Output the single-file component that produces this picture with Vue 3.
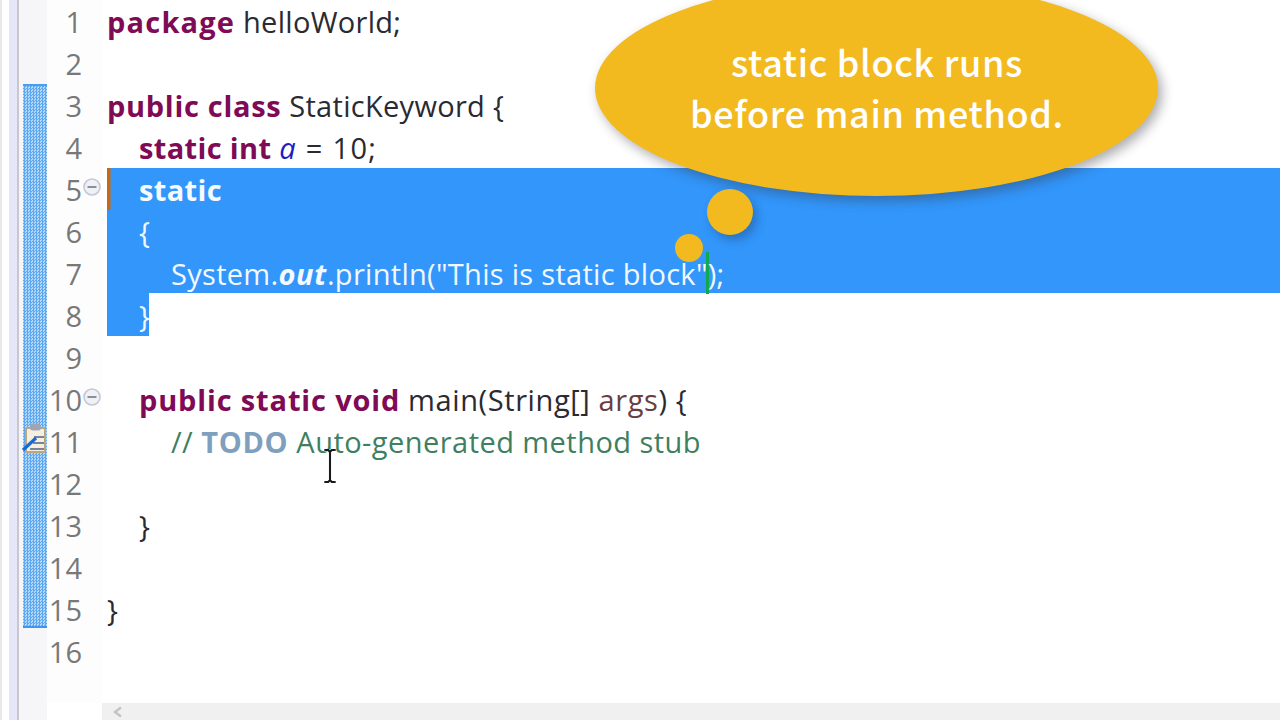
<script setup>
const lines = [
  { n: 1, indent: 0, html: '<b class="wide">package</b> helloWorld;' },
  { n: 2, indent: 0, html: '' },
  { n: 3, indent: 0, html: '<b>public class</b> StaticKeyword {' },
  { n: 4, indent: 1, html: '<b class="tight">static int</b> <span class="loose"><i>a</i> = 10;</span>' },
  { n: 5, indent: 1, html: '<b class="tight">static</b>', sel: 'full', fold: true },
  { n: 6, indent: 1, html: '{', sel: 'full' },
  { n: 7, indent: 2, html: 'System.<em>out</em>.println(<s>"This is static block"</s><u></u>);', sel: 'full', cut: true },
  { n: 8, indent: 1, html: '}', sel: 'part' },
  { n: 9, indent: 0, html: '' },
  { n: 10, indent: 1, html: '<b class="mid">public static void</b> <span class="roomy">main(String[] <q>args</q>) {</span>', fold: true },
  { n: 11, indent: 2, html: '<a>// <strong>TODO</strong> Auto-generated method stub</a>', task: true },
  { n: 12, indent: 0, html: '' },
  { n: 13, indent: 1, html: '}' },
  { n: 14, indent: 0, html: '' },
  { n: 15, indent: 0, html: '}' },
  { n: 16, indent: 0, html: '' }
]
</script>

<template>
  <div class="screen">
    <div class="edge"></div>
    <div class="band"></div>
    <div class="ruler-col">
      <div class="ruler"></div>
    </div>
    <div class="main">
      <div class="body">
        <div class="gutter">
          <div v-for="l in lines" :key="l.n" class="num-row">
            <svg v-if="l.task" class="task" viewBox="0 0 25 31">
              <rect x="4" y="5" width="19" height="24" rx="1" fill="#f4efe0" stroke="#bda77a" stroke-width="2" />
              <rect x="8" y="0.5" width="11" height="7" rx="3" fill="#9fa5b2" />
              <path d="M12 14h10M11 20h11M8 26h14" stroke="#76859a" stroke-width="1.8" />
              <path d="M1 27 14 15" stroke="#1668d8" stroke-width="3.2" />
            </svg>
            <span class="num">{{ l.n }}</span>
            <svg v-if="l.fold" class="fold" viewBox="0 0 18 18">
              <circle cx="9" cy="9" r="8" fill="#f0f1f5" stroke="#c3c8d4" stroke-width="1.6" />
              <path d="M4.5 9h9" stroke="#7d8594" stroke-width="1.8" />
            </svg>
          </div>
        </div>
        <div class="code">
          <div
            v-for="l in lines"
            :key="l.n"
            class="line"
            :class="[`indent-${l.indent}`, l.sel && `sel-${l.sel}`, l.fold && l.sel && 'marked', l.cut && 'cut']"
          ><span class="text" v-html="l.html"></span></div>
        </div>
      </div>
      <div class="scrollbar">
        <svg class="arrow" viewBox="0 0 12 12"><path d="M9 1.5 3 6l6 4.5" fill="none" stroke="#c4c4c4" stroke-width="2.4" /></svg>
      </div>
    </div>

    <div class="bubble">
      <p>static block runs</p>
      <p>before main method.</p>
    </div>
    <div class="dot dot-big"></div>
    <div class="dot dot-small"></div>

    <svg class="ibeam" viewBox="0 0 16 36">
      <path d="M2 1h4l2 2 2-2h4M8 3v30M2 35h4l2-2 2 2h4" fill="none" stroke="#fff" stroke-width="3.6" opacity=".7" />
      <path d="M2 1h4l2 2 2-2h4M8 3v30M2 35h4l2-2 2 2h4" fill="none" stroke="#1a1a1a" stroke-width="2.2" />
    </svg>
  </div>
</template>

<style scoped>
.screen {
  position: relative;
  display: flex;
  width: 1280px;
  height: 720px;
  overflow: hidden;
  background: #fff;
  font-family: "Open Sans", "Noto Sans", sans-serif;
}
.edge {
  width: 9px;
  background: linear-gradient(90deg, #e8e8e8 0 2px, #fff 2px);
}
.band {
  width: 8px;
  background: #e6e6f8;
  border-right: 2px solid #c8c8cc;
}
.ruler-col {
  width: 24px;
  padding-left: 4px;
  background: #f6f6f8;
}
.ruler {
  box-sizing: border-box;
  height: 544px;
  margin-top: 84px;
  background-image: repeating-conic-gradient(#5ca8f2 0 25%, #b4d8fa 0 50%);
  background-size: 3px 3px;
  border-top: 2px solid #4a9df0;
  border-bottom: 2px solid #3f96ee;
}
.main {
  flex: 1;
  display: flex;
  flex-direction: column;
  min-width: 0;
}
.body {
  flex: 1;
  display: flex;
  min-height: 0;
}
.gutter {
  width: 55px;
  flex: none;
  background: #fdfdfd;
}
.num-row {
  position: relative;
  height: 42px;
  padding-right: 20px;
  text-align: right;
  color: #787878;
  font-size: 29px;
  line-height: 44px;
}
.fold {
  position: absolute;
  right: 1px;
  top: 10px;
  width: 18px;
  height: 18px;
}
.task {
  position: absolute;
  left: -25px;
  top: 3px;
  width: 25px;
  height: 31px;
}
.code {
  flex: 1;
  min-width: 0;
  padding-left: 5px;
}
.line {
  height: 42px;
  color: #2a2a33;
  font-size: 29px;
  line-height: 44px;
  white-space: pre;
  letter-spacing: 0.3px;
}
.indent-1 { padding-left: 32px; }
.indent-2 { padding-left: 64px; }
.sel-full { background: #3296fb; color: #f2f8ff; }
.sel-part { background: #3296fb; color: #f2f8ff; width: 42px; box-sizing: border-box; }
.cut {
  background:
    linear-gradient(#3296fb, #3296fb) 0 0 / 42px 100% no-repeat,
    linear-gradient(#3296fb 0 41px, #fff 41px);
}
.marked { box-shadow: inset 3.5px 0 0 #c8680f; }
.text :deep(b) { font-weight: 700; color: #7f0a55; letter-spacing: 0.7px; }
.text :deep(b.wide) { letter-spacing: 1.2px; }
.text :deep(b.mid) { letter-spacing: 0.85px; }
.text :deep(b.tight) { letter-spacing: 0.35px; }
.text :deep(.loose) { letter-spacing: 1.3px; }
.text :deep(.roomy) { letter-spacing: 0.6px; }
.sel-full .text :deep(b) { color: #f5faff; }
.text :deep(i) { color: #1a1fc0; }
.text :deep(em) { font-weight: 700; font-style: italic; color: #f5faff; letter-spacing: 0.7px; }
.text :deep(s) { text-decoration: none; }
.text :deep(u) {
  display: inline-block;
  width: 3px;
  height: 42px;
  margin: 0 -1.5px;
  vertical-align: -9px;
  background: #10a850;
  text-decoration: none;
}
.text :deep(q) { quotes: none; color: #6a3e3e; }
.text :deep(a) { color: #3f7f5f; letter-spacing: 0.45px; }
.text :deep(strong) { font-weight: 700; color: #7f9fbf; letter-spacing: 0.7px; }
.scrollbar {
  height: 17px;
  flex: none;
  display: flex;
  align-items: center;
  margin-left: 55px;
  padding-left: 10px;
  background: #f0f0f0;
}
.arrow { width: 12px; height: 12px; }
.bubble {
  position: absolute;
  left: 595px;
  top: -20px;
  width: 563px;
  height: 216px;
  display: flex;
  flex-direction: column;
  align-items: center;
  justify-content: center;
  box-sizing: border-box;
  padding: 0 0 2px 1px;
  border-radius: 50%;
  background: #f2ba1f;
  box-shadow: 4px 5px 12px rgba(50, 50, 60, 0.4);
  color: #fff;
  font-family: "Noto Sans CJK SC", "Noto Sans", sans-serif;
  font-size: 36px;
  font-weight: 500;
  letter-spacing: 0.65px;
  line-height: 51px;
}
.bubble p { margin: 0; }
.dot {
  position: absolute;
  border-radius: 50%;
  background: #f2ba1f;
}
.dot-big {
  left: 707px;
  top: 189px;
  width: 46px;
  height: 46px;
  box-shadow: 4px 5px 10px rgba(30, 50, 90, 0.35);
}
.dot-small {
  left: 675px;
  top: 234px;
  width: 28px;
  height: 28px;
}
.ibeam {
  position: absolute;
  left: 322px;
  top: 449px;
  width: 16px;
  height: 34px;
}
</style>
